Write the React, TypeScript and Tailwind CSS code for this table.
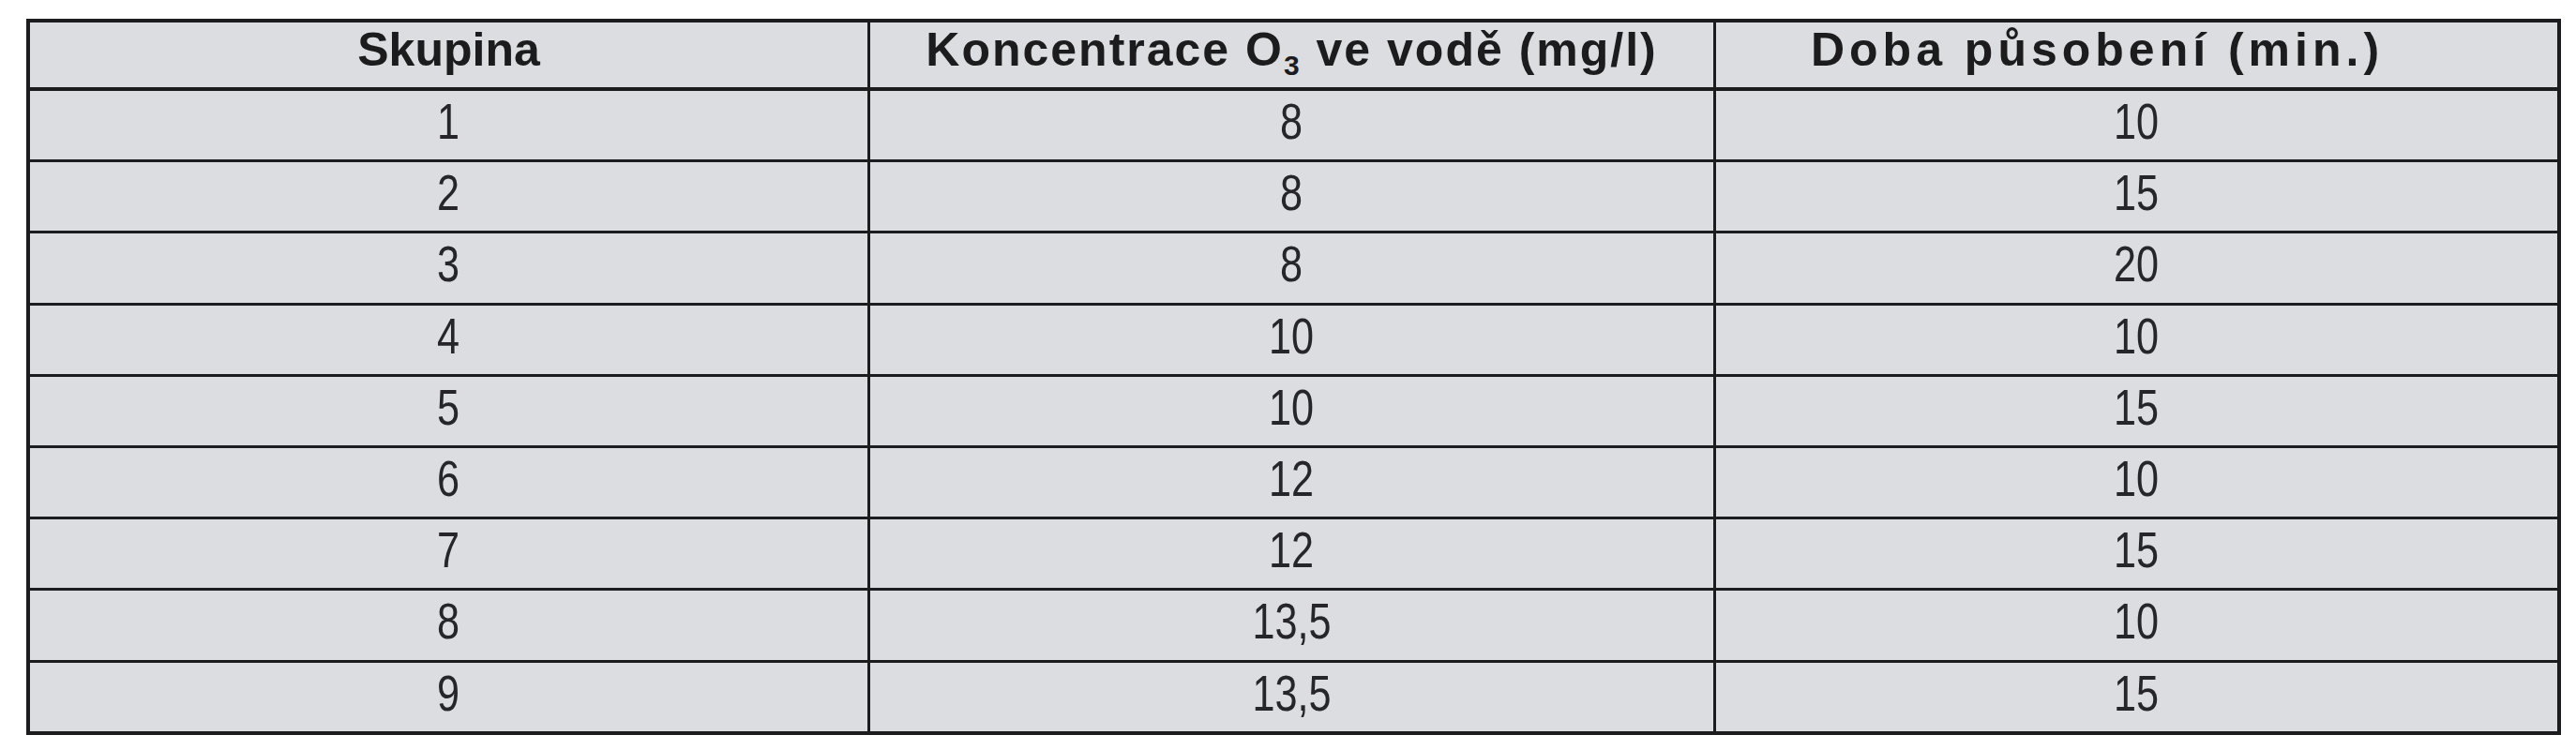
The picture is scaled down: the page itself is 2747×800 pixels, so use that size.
import React from "react";

const rows: [string, string, string][] = [
  ["1", "8", "10"],
  ["2", "8", "15"],
  ["3", "8", "20"],
  ["4", "10", "10"],
  ["5", "10", "15"],
  ["6", "12", "10"],
  ["7", "12", "15"],
  ["8", "13,5", "10"],
  ["9", "13,5", "15"],
];

function Num({ v }: { v: string }) {
  return <span className="inline-block scale-x-[0.8]">{v}</span>;
}

export default function App() {
  return (
    <div className="w-[2747px] h-[800px] bg-white overflow-hidden">
      <div className="ml-[28px] mt-[20px] w-[2703px] border-[4px] border-[#1c1c1e] bg-[#dcdde0] text-[#1c1c1e]">
        <div className="flex h-[73px] border-b-[4px] border-[#1c1c1e] font-['Liberation_Sans',Arial,sans-serif] font-bold text-[50px] leading-none">
          <div className="w-[893px] flex items-center justify-center pb-[12px]">Skupina</div>
          <div className="w-[902px] border-l-[3px] border-[#1c1c1e] flex items-center justify-center pb-[12px]">
            <span className="tracking-[2px]">
              Koncentrace O<sub className="text-[30px] -bottom-[10px]">3</sub> ve vodě (mg/l)
            </span>
          </div>
          <div className="w-[900px] border-l-[3px] border-[#1c1c1e] flex items-center justify-center pb-[12px] pr-[84px]">
            <span className="tracking-[5px]">Doba působení (min.)</span>
          </div>
        </div>
        {rows.map((r, i) => (
          <div
            key={i}
            className={
              i < rows.length - 1
                ? "flex h-[76.2px] border-b-[3px] border-[#1c1c1e] font-['Liberation_Sans',Arial,sans-serif] text-[54px] leading-none text-[#26262a]"
                : "flex h-[73.2px] font-['Liberation_Sans',Arial,sans-serif] text-[54px] leading-none text-[#26262a]"
            }
          >
            <div className="w-[893px] flex items-center justify-center pb-[9px]"><Num v={r[0]} /></div>
            <div className="w-[902px] border-l-[3px] border-[#1c1c1e] flex items-center justify-center pb-[9px]"><Num v={r[1]} /></div>
            <div className="w-[900px] border-l-[3px] border-[#1c1c1e] flex items-center justify-center pb-[9px]"><Num v={r[2]} /></div>
          </div>
        ))}
      </div>
    </div>
  );
}
